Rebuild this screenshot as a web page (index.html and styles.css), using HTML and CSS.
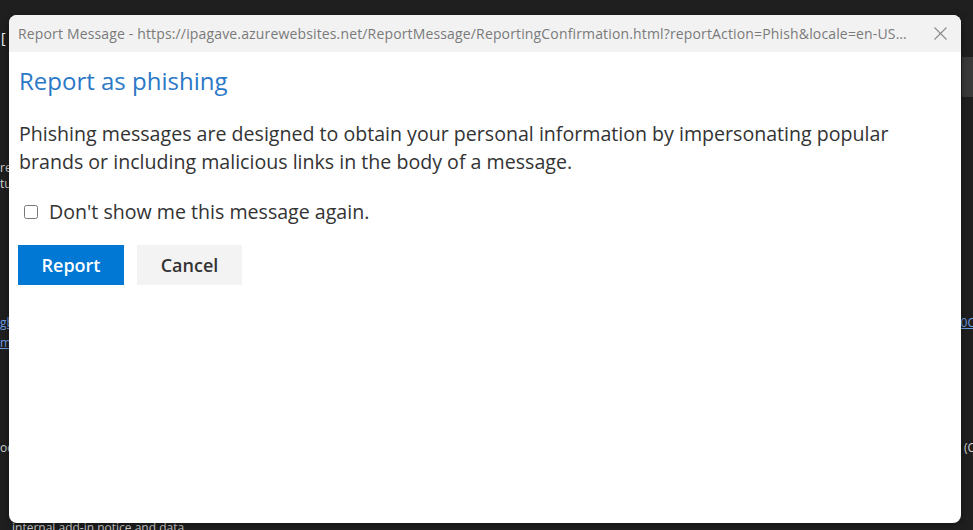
FILE: index.html
```html
<!DOCTYPE html>
<html lang="en">
  <head>
    <meta charset="UTF-8" />
    <meta name="viewport" content="width=device-width, initial-scale=1.0" />
    <title>Report Message</title>
    <link rel="stylesheet" href="styles.css">
  </head>
  <body>
    <div class="page">
      <div class="row row-1"><span class="glyph">[</span></div>
      <div class="row row-band"><span></span><span class="band"></span></div>
      <div class="row row-2"><span>re</span></div>
      <div class="row row-3"><span>tu</span></div>
      <div class="row row-4"><a href="#">gb</a><a href="#" class="edge">0C</a></div>
      <div class="row row-5"><a href="#">m</a></div>
      <div class="row row-6"><span>oc</span><span class="edge">(C</span></div>
      <div class="row row-7"><span class="bottom-text">internal add-in notice and data</span></div>
    </div>

    <div class="dialog">
      <div class="titlebar">
        <span class="title">Report Message - https://ipagave.azurewebsites.net/ReportMessage/ReportingConfirmation.html?reportAction=Phish&amp;locale=en-US&amp;host=outlook</span>
        <button class="close" aria-label="Close">
          <svg width="13" height="13" viewBox="0 0 13 13">
            <path d="M0.5 0.5 L12.5 12.5 M12.5 0.5 L0.5 12.5" stroke="#8a8a8a" stroke-width="1.1" fill="none" />
          </svg>
        </button>
      </div>
      <div class="content">
        <h2 class="heading">Report as phishing</h2>
        <p class="text">Phishing messages are designed to obtain your personal information by impersonating popular brands or including malicious links in the body of a message.</p>
        <label class="check">
          <input type="checkbox" />
          <span>Don't show me this message again.</span>
        </label>
        <div class="actions">
          <button class="btn btn-primary">Report</button>
          <button class="btn btn-secondary">Cancel</button>
        </div>
      </div>
    </div>
  </body>
</html>
```

FILE: styles.css
```css
body {
  margin: 0;
  padding: 0;
  height: 530px;
  overflow: hidden;
  background: #1f1f1f;
  font-family: "Segoe UI", "Open Sans", "Noto Sans", sans-serif;
  position: relative;
}
.page {
  width: 973px;
  color: #d4d4d4;
  font-size: 12px;
}
.row {
  display: flex;
  justify-content: space-between;
  height: 15px;
  line-height: 15px;
  white-space: nowrap;
}
.row a {
  color: #6f9fe6;
}
.row-1 { margin-top: 30px; }
.row-band { margin-top: 12px; height: 40px; }
.row-2 { margin-top: 63px; }
.row-3 { margin-top: 1px; }
.row-4 { margin-top: 124px; }
.row-5 { margin-top: 5px; }
.row-6 { margin-top: 90px; }
.row-7 { margin-top: 65px; }
.glyph {
  color: #fff;
  font-size: 14px;
  padding-left: 1px;
}
.band {
  width: 11px;
  height: 40px;
  background: #3a3a3a;
}
.edge {
  margin-right: -2px;
}
.bottom-text {
  padding-left: 12px;
}

.dialog {
  position: absolute;
  left: 9px;
  top: 15px;
  width: 952px;
  height: 508px;
  background: #fff;
  border-radius: 8px;
  overflow: hidden;
  box-shadow: 0 2px 8px rgba(0, 0, 0, 0.4);
}
.titlebar {
  display: flex;
  align-items: center;
  height: 37px;
  background: #f2f2f2;
  padding: 0 14px 0 9px;
}
.title {
  flex: 1;
  min-width: 0;
  overflow: hidden;
  white-space: nowrap;
  text-overflow: ellipsis;
  color: #7a7a7a;
  font-size: 14px;
  letter-spacing: 0.15px;
  padding-right: 20px;
}
.close {
  border: 0;
  background: none;
  padding: 0;
  width: 13px;
  height: 13px;
  display: flex;
}
.content {
  padding: 0 10px;
}
.heading {
  margin: 13px 0 0;
  font-size: 24px;
  font-weight: normal;
  color: #2b78c6;
  line-height: 32px;
}
.text {
  margin: 23px 0 0;
  font-size: 19.6px;
  line-height: 28px;
  color: #333;
}
.check {
  display: flex;
  align-items: center;
  gap: 11px;
  margin-top: 22px;
  padding-left: 5px;
  font-size: 19.6px;
  color: #333;
}
.check input {
  margin: 0;
  width: 14px;
  height: 14px;
}
.actions {
  display: flex;
  gap: 13px;
  margin-top: 20px;
}
.btn {
  height: 40px;
  border: 0;
  border-radius: 0;
  font-family: inherit;
  font-size: 18px;
  font-weight: 600;
  padding: 0;
}
.btn-primary {
  width: 106px;
  margin-left: -1px;
  background: #0078d4;
  color: #fff;
}
.btn-secondary {
  width: 105px;
  background: #f3f3f3;
  color: #333;
}
```
